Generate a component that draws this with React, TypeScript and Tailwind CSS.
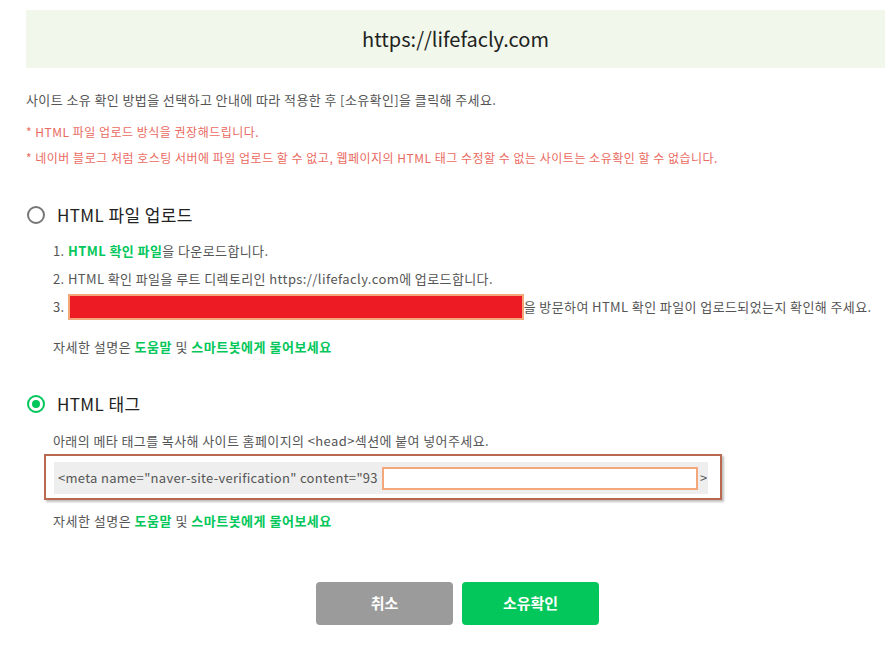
import React from "react";

const font = { fontFamily: '"Noto Sans CJK KR", "Noto Sans", sans-serif' };

function Help() {
  return (
    <div className="text-[13px] leading-[20px] text-[#555] tracking-[0.5px]">
      자세한 설명은 <span className="text-[#03c75a] font-semibold">도움말</span> 및{" "}
      <span className="text-[#03c75a] font-semibold">스마트봇에게 물어보세요</span>
    </div>
  );
}

export default function App() {
  return (
    <div className="w-[885px] h-[651px] bg-white overflow-hidden" style={font}>
      <div className="mt-[10px] ml-[26px] h-[58px] bg-[#f1f7ea] flex items-center justify-center text-[20px] text-[#222]">
        https://lifefacly.com
      </div>
      <div className="pl-[26px]">
        <div className="mt-[22px] text-[13px] leading-[20px] text-[#555] tracking-[0.4px]">
          사이트 소유 확인 방법을 선택하고 안내에 따라 적용한 후 [소유확인]을 클릭해 주세요.
        </div>
        <div className="mt-[9px] text-[12px] leading-[26px] text-[#ea6a5f] tracking-[0.5px]">
          <div>* HTML 파일 업로드 방식을 권장해드립니다.</div>
          <div>
            * 네이버 블로그 처럼 호스팅 서버에 파일 업로드 할 수 없고, 웹페이지의 HTML 태그 수정할 수 없는 사이트는 소유확인 할 수 없습니다.
          </div>
        </div>

        <div className="mt-[32px] h-[24px] flex items-center">
          <span className="ml-[1px] w-[18px] h-[18px] rounded-full border-2 border-[#777] box-border" />
          <span className="ml-[12px] text-[17px] text-[#222] leading-[24px] tracking-[0.4px]">HTML 파일 업로드</span>
        </div>
        <div className="pl-[27px] mt-[10px] text-[13px] leading-[28px] text-[#555] tracking-[0.4px]">
          <div>
            1. <span className="text-[#03c75a] font-semibold">HTML 확인 파일</span>을 다운로드합니다.
          </div>
          <div>2. HTML 확인 파일을 루트 디렉토리인 https://lifefacly.com에 업로드합니다.</div>
          <div className="flex items-center">
            <span>3.</span>
            <span className="ml-[3px] w-[456px] h-[26px] bg-[#ed1c24] border-2 border-[#f5a77c] box-border" />
            <span>을 방문하여 HTML 확인 파일이 업로드되었는지 확인해 주세요.</span>
          </div>
          <div className="mt-[16px]">
            <Help />
          </div>
        </div>

        <div className="mt-[35px] h-[24px] flex items-center">
          <span className="ml-[1px] w-[18px] h-[18px] rounded-full border-[2.5px] border-[#03c75a] box-border flex items-center justify-center">
            <span className="w-[8px] h-[8px] rounded-full bg-[#03c75a]" />
          </span>
          <span className="ml-[12px] text-[17px] text-[#222] leading-[24px] tracking-[0.4px]">HTML 태그</span>
        </div>
        <div className="pl-[27px]">
          <div className="mt-[15px] text-[13px] leading-[20px] text-[#555] tracking-[0.4px]">
            아래의 메타 태그를 복사해 사이트 홈페이지의 &lt;head&gt;섹션에 붙여 넣어주세요.
          </div>
          <div className="-ml-[9px] mt-[3px] w-[678px] h-[46px] border-2 border-[#b8694f] box-border shadow-[2px_2px_2px_rgba(0,0,0,0.25)] pt-[6px] pl-[8px]">
            <div className="w-[654px] h-[32px] bg-[#eeeeee] flex items-center pl-[4px] text-[13px] text-[#555] tracking-[0.3px] whitespace-nowrap">
              <span className="w-[324px] shrink-0">&lt;meta name="naver-site-verification" content="93</span>
              <span className="w-[316px] h-[23px] bg-white border-2 border-[#f5a77c] box-border shrink-0" />
              <span className="ml-[2px]">&gt;</span>
            </div>
          </div>
          <div className="mt-[11px]">
            <Help />
          </div>
        </div>

        <div className="mt-[51px] flex justify-center gap-[9px] pl-[4px]">
          <button className="w-[137px] h-[43px] rounded-[4px] bg-[#9b9b9b] text-white font-bold text-[15px]">취소</button>
          <button className="w-[137px] h-[43px] rounded-[4px] bg-[#03c75a] text-white font-bold text-[15px]">소유확인</button>
        </div>
      </div>
    </div>
  );
}
